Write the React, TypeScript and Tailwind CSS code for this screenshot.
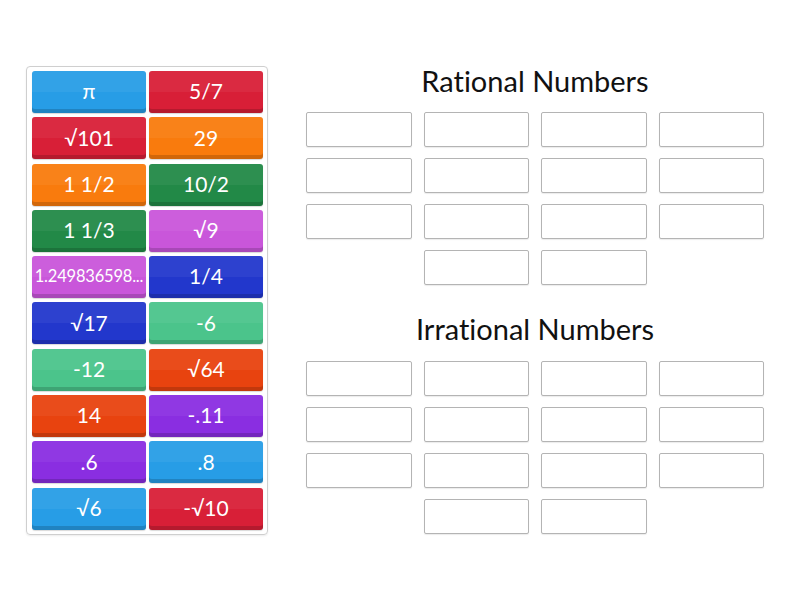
const palette = [
  "bg-[#279de6]",
  "bg-[#d81f37]",
  "bg-[#f97b0d]",
  "bg-[#228947]",
  "bg-[#c956da]",
  "bg-[#2237cc]",
  "bg-[#4bc48b]",
  "bg-[#e8430f]",
  "bg-[#8a2ee1]",
];

const tiles = [
  "π",
  "5/7",
  "√101",
  "29",
  "1 1/2",
  "10/2",
  "1 1/3",
  "√9",
  "1.249836598...",
  "1/4",
  "√17",
  "-6",
  "-12",
  "√64",
  "14",
  "-.11",
  ".6",
  ".8",
  "√6",
  "-√10",
];

const Tile = ({ label, index }: { label: string; index: number }) => {
  const color = palette[Math.ceil(index / 2) % palette.length];
  const small = label.length > 8;
  return (
    <div
      className={`${color} relative flex items-center justify-center rounded-[3px] text-white shadow-[inset_0_-4px_0_rgba(0,0,0,0.16),0_1px_1px_rgba(0,0,0,0.15)] overflow-hidden`}
    >
      <div className="absolute inset-x-0 top-0 h-1/2 bg-white/5" />
      <span
        className={`relative whitespace-nowrap pb-[2px] ${
          small ? "text-[16.5px] tracking-[-0.2px]" : "text-[21px]"
        }`}
      >
        {label}
      </span>
    </div>
  );
};

const DropGrid = () => (
  <div className="flex w-[458px] flex-wrap justify-center gap-x-[12px] gap-y-[11px]">
    {Array.from({ length: 14 }).map((_, i) => (
      <div
        key={i}
        className="h-[35px] w-[105.5px] rounded-[2px] border border-[#b4b4b4] bg-white shadow-[0_1px_1px_rgba(0,0,0,0.08)]"
      />
    ))}
  </div>
);

export default function App() {
  return (
    <div
      className="flex h-[600px] w-[800px] bg-white pl-[26px] text-[#111] [font-variant-ligatures:none]"
      style={{ fontFamily: "Lato, 'Noto Sans', sans-serif" }}
    >
      <div className="mt-[66px] h-[469px] w-[242px] rounded-[4px] border border-[#cfcfcf] pl-[5px] pr-[4px] pt-[4px] shadow-[0_1px_2px_rgba(0,0,0,0.08)]">
        <div className="grid grid-cols-2 gap-x-[3px] gap-y-[4.3px] auto-rows-[42px]">
          {tiles.map((t, i) => (
            <Tile key={i} label={t} index={i} />
          ))}
        </div>
      </div>

      <div className="ml-[38px] flex w-[458px] flex-col items-center pt-[65px]">
        <h2 className="text-[29px] leading-[32px]">Rational Numbers</h2>
        <div className="mt-[15px]">
          <DropGrid />
        </div>
        <h2 className="mt-[28px] text-[29px] leading-[32px]">Irrational Numbers</h2>
        <div className="mt-[16px]">
          <DropGrid />
        </div>
      </div>
    </div>
  );
}
